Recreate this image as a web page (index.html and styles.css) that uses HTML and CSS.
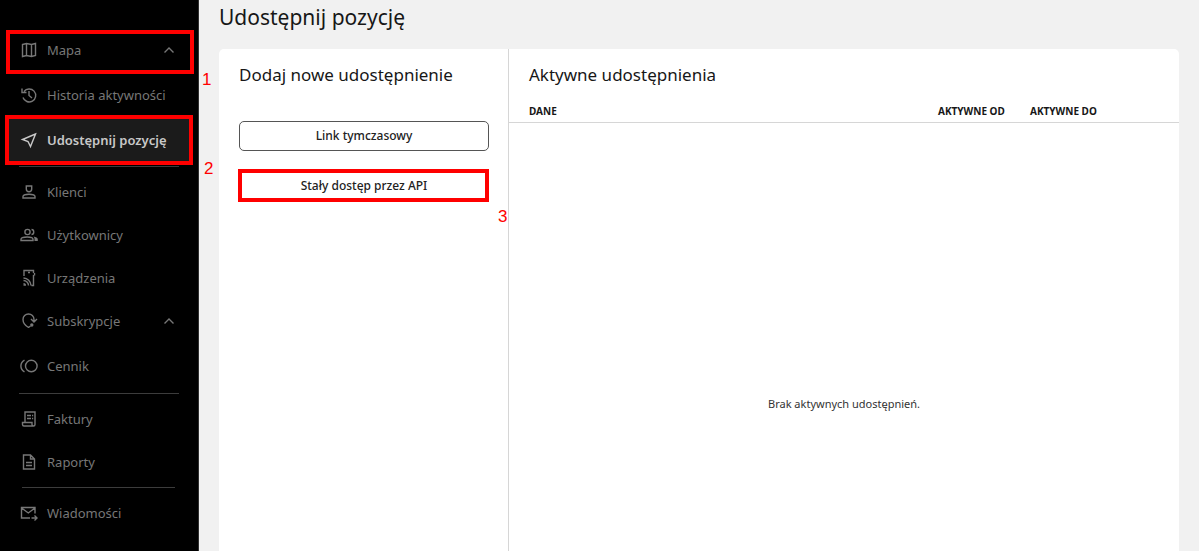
FILE: index.html
```html
<!DOCTYPE html>
<html lang="pl">
<head>
<meta charset="utf-8">
<meta name="viewport" content="width=device-width, initial-scale=1">
<title>Udostępnij pozycję</title>
<link rel="stylesheet" href="styles.css">
</head>
<body>
<div class="app">
  <nav class="sidebar" aria-label="Menu">
    <div class="group">
      <button class="item parent" type="button" aria-expanded="true">
        <svg class="icon" viewBox="0 0 18 18"><path d="M2.500 3.500 6.500 2.500 11.500 3.500 15.500 2.500V14.500L11.500 15.500 6.500 14.500 2.500 15.500ZM6.500 2.500V14.500M11.500 3.500V15.500"/></svg>
        <span>Mapa</span>
        <svg class="chevron" viewBox="0 0 12 12"><path d="M1.500 8.500 6 4 10.500 8.500"/></svg>
      </button>
      <a class="item" href="#historia">
        <svg class="icon" viewBox="0 0 18 18"><path d="M4 5.500A6.500 6.500 0 1 1 3 11.500M2 2.500V6.500H6.500M9 5V9.500L12 12"/></svg>
        <span>Historia aktywności</span>
      </a>
      <a class="item active" href="#udostepnij" aria-current="page">
        <svg class="icon" viewBox="0 0 18 18"><path d="M15.500 3 2.500 8.500 8 10.500 10.500 15.500Z"/></svg>
        <span>Udostępnij pozycję</span>
      </a>
    </div>
    <div class="group clients">
      <a class="item" href="#klienci">
        <svg class="icon" viewBox="0 0 18 18"><path d="M6.300 3H11.700V6A2.700 2.700 0 0 1 6.300 6ZM3 15V13.500C3 11.800 6 11.200 9 11.200S15 11.800 15 13.500V15Z"/></svg>
        <span>Klienci</span>
      </a>
      <a class="item" href="#uzytkownicy">
        <svg class="icon" viewBox="0 0 18 18"><circle cx="7.500" cy="6" r="2.600"/><path d="M1 14.500V13.200C1 11.700 4.500 11 7.200 11S13 11.700 13 13.200V14.500ZM11.500 3.500C14.500 3.500 14.500 8.500 11.500 8.500"/><path class="solid" d="M13.500 10.500C16 11 17.800 12 17.800 13.200V15H14.500V13.200C14.500 12 14.200 11.200 13.500 10.500Z"/></svg>
        <span>Użytkownicy</span>
      </a>
      <a class="item" href="#urzadzenia">
        <svg class="icon" viewBox="0 0 18 18"><path d="M4 7V1.500H13.500V4M13.500 6V16.500H11.500M14.500 4V6.500M8 3.500H10M3.500 9A8 8 0 0 1 11 16.500M3.500 11.500A5 5 0 0 1 8.500 16.500"/><path class="solid" d="M3.500 14A2.600 2.600 0 0 1 6 16.800H3.500Z"/></svg>
        <span>Urządzenia</span>
      </a>
      <button class="item parent" type="button" aria-expanded="true">
        <svg class="icon" viewBox="0 0 18 18"><path d="M8.500 15.500C5 13.500 3 11 3 7.500A5.500 5.500 0 0 1 14 7.500V9M11 7 14 10 17 7M8.500 15.500 10.500 14"/><circle class="solid" cx="11.800" cy="13" r="1.700"/></svg>
        <span>Subskrypcje</span>
        <svg class="chevron" viewBox="0 0 12 12"><path d="M1.500 8.500 6 4 10.500 8.500"/></svg>
      </button>
      <a class="item" href="#cennik">
        <svg class="icon" viewBox="0 0 18 18"><circle cx="11.300" cy="9" r="5.800"/><path d="M4.500 3.200C-.3 6 -.3 12 4.500 14.800"/></svg>
        <span>Cennik</span>
      </a>
    </div>
    <div class="group billing">
      <a class="item" href="#faktury">
        <svg class="icon" viewBox="0 0 18 18"><path d="M5 12.500V2H15V14.500A1.500 1.500 0 0 1 13.500 16H4A1.500 1.500 0 0 1 2.500 14.500V12.500H12V14.500A1.500 1.500 0 0 0 13.500 16M7 5.500H11M7 8.500H11M12 5.500H13.200M12 8.500H13.200"/></svg>
        <span>Faktury</span>
      </a>
      <a class="item" href="#raporty">
        <svg class="icon" viewBox="0 0 18 18"><path d="M3.500 2H10.500L14.500 6V16H3.500ZM10.500 2V6H14.500M6 9.500H12M6 12.500H12"/></svg>
        <span>Raporty</span>
      </a>
    </div>
    <div class="group">
      <a class="item" href="#wiadomosci">
        <svg class="icon" viewBox="0 0 18 18"><path d="M10 14H1.500V3.500H15V9.500M1.500 4 8.300 9 15 4M11.500 14H16.500M14.500 11.500 17 14 14.500 16.500"/></svg>
        <span>Wiadomości</span>
      </a>
    </div>
  </nav>
  <main class="content">
    <h1 class="title">Udostępnij pozycję</h1>
    <div class="panel">
      <section class="create">
        <h2 class="heading">Dodaj nowe udostępnienie</h2>
        <div class="actions">
          <button class="action" type="button">Link tymczasowy</button>
          <button class="action" type="button">Stały dostęp przez API</button>
        </div>
      </section>
      <section class="shares">
        <h2 class="heading">Aktywne udostępnienia</h2>
        <table class="table">
          <thead><tr><th>Dane</th><th class="date">Aktywne od</th><th class="date-last">Aktywne do</th></tr></thead>
          <tbody><tr><td class="empty" colspan="3">Brak aktywnych udostępnień.</td></tr></tbody>
        </table>
      </section>
    </div>
  </main>
  <div class="mark mark-map"></div>
  <div class="mark mark-share"></div>
  <div class="mark mark-api"></div>
  <span class="step step-one">1</span>
  <span class="step step-two">2</span>
  <span class="step step-three">3</span>
</div>
</body>
</html>
```
FILE: styles.css
```css
* { box-sizing: border-box; }
body {
  margin: 0;
  background: #f1f1f1;
  color: #171717;
  font-family: "Noto Sans", "Open Sans", sans-serif;
}
.app {
  position: relative;
  display: flex;
  height: 100vh;
  overflow: hidden;
}
.sidebar {
  flex: none;
  width: 199px;
  padding: 28px 9px 0;
  background: #000;
  border-right: 1px solid #303030;
}
.group {
  padding-bottom: 5px;
}
.group.clients { padding-bottom: 6px; }
.group.billing { padding-bottom: 4px; }
.group + .group {
  padding-top: 4px;
}
.group + .group::before {
  content: "";
  display: block;
  height: 1px;
  margin: -4px 10px 3px;
  background: #3c3c3c;
}
.billing + .group::before {
  margin-left: 13px;
  margin-right: 14px;
}
.item {
  display: flex;
  align-items: center;
  gap: 9px;
  width: 100%;
  height: 43px;
  padding: 0 14px 0 11px;
  border: 0;
  background: none;
  color: #777;
  font: 400 13px/20px "Noto Sans", "Open Sans", sans-serif;
  text-align: left;
  text-decoration: none;
}
.parent { margin-bottom: 2px; }
.active {
  margin-top: 2px;
  background: #1b1b1b;
  color: #c8c8c8;
  font-weight: 600;
}
.icon {
  flex: none;
  width: 18px;
  height: 18px;
  fill: none;
  stroke: currentColor;
  stroke-width: 1.4;
}
.icon .solid { fill: currentColor; stroke: none; }
.chevron {
  width: 12px;
  height: 12px;
  margin-left: auto;
  fill: none;
  stroke: currentColor;
  stroke-width: 1.4;
}
.content {
  display: flex;
  flex: 1;
  flex-direction: column;
  min-width: 0;
  padding: 3px 20px 0;
}
.title {
  margin: 0 0 18px;
  font-size: 21px;
  font-weight: 400;
  line-height: 28px;
}
.panel {
  display: flex;
  flex: 1;
  background: #fff;
  border-radius: 5px 5px 0 0;
}
.create {
  flex: none;
  width: 290px;
  padding: 14px 19px 0 20px;
  border-right: 1px solid #d6d6d6;
}
.heading {
  margin: 0;
  font-size: 17px;
  font-weight: 400;
  line-height: 24px;
}
.actions {
  display: grid;
  gap: 20px;
  margin-top: 34px;
}
.action {
  height: 30px;
  border: 1px solid #555;
  border-radius: 5px;
  background: #fff;
  color: #222;
  font: 500 12px/16px "Noto Sans", "Open Sans", sans-serif;
}
.shares {
  flex: 1;
  padding-top: 14px;
}
.shares .heading { padding-left: 20px; }
.table {
  width: 100%;
  margin-top: 13px;
  border-collapse: collapse;
  table-layout: fixed;
}
.table th {
  height: 22px;
  padding: 0;
  border-bottom: 1px solid #d6d6d6;
  font-size: 10px;
  font-weight: 700;
  line-height: 16px;
  text-align: left;
  text-transform: uppercase;
}
.table th:first-child { padding-left: 20px; }
.table .date { width: 92px; }
.table .date-last { width: 149px; }
.table .empty {
  padding: 273px 0 0;
  color: #333;
  font-size: 11px;
  font-weight: 400;
  line-height: 16px;
  text-align: center;
}
.mark {
  position: absolute;
  border: 4px solid #f00;
  pointer-events: none;
}
.mark-map { left: 6px; top: 30px; width: 188px; height: 44px; }
.mark-share { left: 5px; top: 115px; width: 188px; height: 50px; }
.mark-api { left: 238px; top: 169px; width: 251px; height: 33px; }
.step {
  position: absolute;
  color: #f00;
  font: 17px/18px "Liberation Sans", Arial, sans-serif;
}
.step-one { left: 202px; top: 71px; }
.step-two { left: 204px; top: 160px; }
.step-three { left: 498px; top: 208px; }
```
